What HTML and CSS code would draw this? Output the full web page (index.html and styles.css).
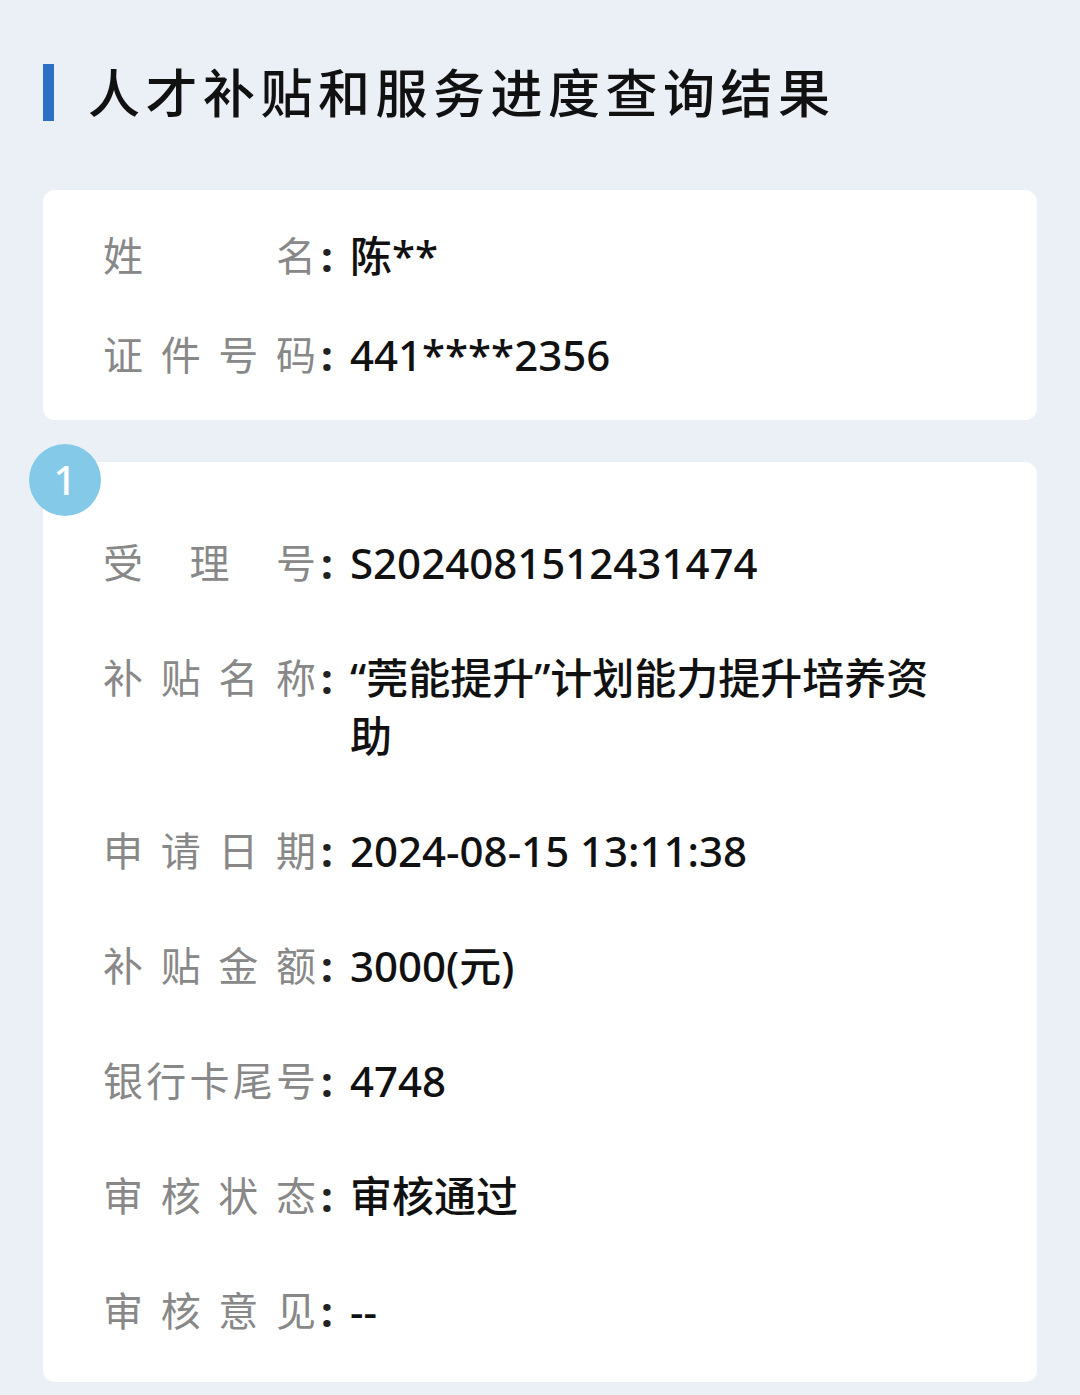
FILE: index.html
```html
<!DOCTYPE html>
<html lang="zh-CN">
<head>
    <meta charset="UTF-8">
    <meta name="viewport" content="width=device-width, initial-scale=1.0">
    <title>人才补贴和服务进度查询结果</title>
    <link rel="stylesheet" href="styles.css">
</head>
<body>
    <div class="page">
        <h1 class="title">人才补贴和服务进度查询结果</h1>

        <!-- 申请人信息 -->
        <div class="card card-person">
            <div class="row">
                <span class="label">姓名</span><span class="colon">:</span>
                <span class="value">陈**</span>
            </div>
            <div class="row">
                <span class="label">证件号码</span><span class="colon">:</span>
                <span class="value">441****2356</span>
            </div>
        </div>

        <!-- 查询结果 -->
        <div class="card card-result">
            <span class="badge">1</span>
            <div class="row">
                <span class="label">受理号</span><span class="colon">:</span>
                <span class="value">S2024081512431474</span>
            </div>
            <div class="row">
                <span class="label">补贴名称</span><span class="colon">:</span>
                <span class="value">“莞能提升”计划能力提升培养资助</span>
            </div>
            <div class="row">
                <span class="label">申请日期</span><span class="colon">:</span>
                <span class="value">2024-08-15 13:11:38</span>
            </div>
            <div class="row">
                <span class="label">补贴金额</span><span class="colon">:</span>
                <span class="value">3000(元)</span>
            </div>
            <div class="row">
                <span class="label">银行卡尾号</span><span class="colon">:</span>
                <span class="value">4748</span>
            </div>
            <div class="row">
                <span class="label">审核状态</span><span class="colon">:</span>
                <span class="value">审核通过</span>
            </div>
            <div class="row">
                <span class="label">审核意见</span><span class="colon">:</span>
                <span class="value">--</span>
            </div>
        </div>
    </div>
</body>
</html>
```

FILE: styles.css
```css
body {
    margin: 0;
    padding: 0;
    background-color: #ebf0f7;
    font-family: "Noto Sans", "Noto Sans CJK SC", sans-serif;
}

.page {
    padding: 64px 43px 0 43px;
}

.title {
    margin: 0;
    height: 57px;
    line-height: 57px;
    border-left: 11px solid #2c6fc4;
    padding-left: 34px;
    font-size: 52px;
    font-weight: 500;
    letter-spacing: 5.5px;
    color: #111;
}

.card {
    position: relative;
    background-color: #fff;
    border-radius: 12px;
    padding: 37px 80px 36px 60px;
    display: flex;
    flex-direction: column;
    gap: 41px;
}

.card-person {
    margin-top: 69px;
}

.card-result {
    margin-top: 42px;
    padding-top: 72px;
    padding-bottom: 42px;
    gap: 57px;
}

/* 序号圆标 */
.badge {
    position: absolute;
    left: -14px;
    top: -18px;
    width: 72px;
    height: 72px;
    border-radius: 50%;
    background-color: #85c9e9;
    color: #fff;
    font-size: 40px;
    font-weight: 500;
    line-height: 72px;
    text-align: center;
}

.row {
    display: flex;
    align-items: flex-start;
    font-size: 42px;
    line-height: 58px;
}

.label {
    flex: none;
    width: 213px;
    font-size: 40px;
    color: #888;
    text-align: justify;
    text-align-last: justify;
}

.colon {
    flex: none;
    width: 29px;
    padding-left: 5px;
    color: #222;
    font-weight: 700;
}

.value {
    flex: 1;
    color: #111;
    font-weight: 500;
}
```
